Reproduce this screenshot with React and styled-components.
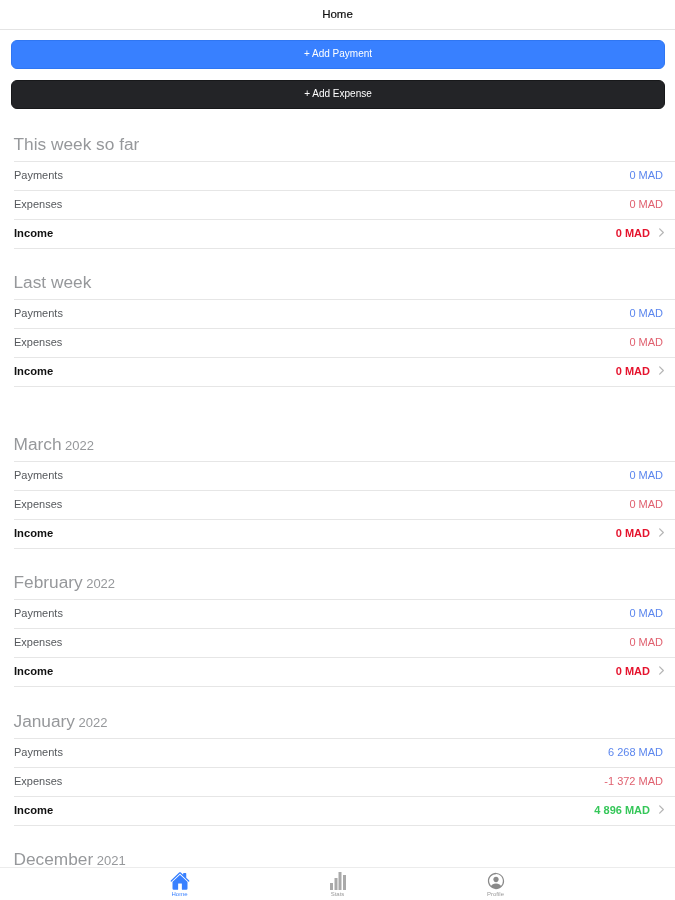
import React from "react";
import styled, { createGlobalStyle } from "styled-components";
import { IoHome, IoPersonCircleOutline, IoChevronForward } from "react-icons/io5";

const Global = createGlobalStyle`
  html, body { margin: 0; padding: 0; background: #fff; }
  body { font-family: "Liberation Sans", Arial, sans-serif; }
`;

const Page = styled.div`
  width: 675px;
  height: 900px;
  display: flex;
  flex-direction: column;
  overflow: hidden;
  background: #fff;
  filter: blur(0.6px);
`;

const Header = styled.header`
  flex: none;
  height: 30px;
  padding-bottom: 1px;
  box-sizing: border-box;
  border-bottom: 1px solid #e4e4e4;
  display: flex;
  align-items: center;
  justify-content: center;
  font-size: 11.5px;
  color: #111;
  -webkit-text-stroke: 0.2px #111;
`;

const Content = styled.main`
  flex: 1;
  min-height: 0;
  overflow: hidden;
`;

const Actions = styled.div`
  display: flex;
  flex-direction: column;
  gap: 11px;
  padding: 10px 10px 0 11px;
`;

const ActionButton = styled.div`
  height: 29px;
  box-sizing: border-box;
  border-radius: 6px;
  padding-bottom: 2px;
  display: flex;
  align-items: center;
  justify-content: center;
  color: #fff;
  font-size: 10px;
  background: ${(p) => (p.$dark ? "#232427" : "#3880ff")};
  border: 1px solid ${(p) => (p.$dark ? "#17181a" : "#2f76f2")};
`;

const Section = styled.section`
  margin-top: ${(p) => p.$gap}px;
`;

const Heading = styled.h2`
  margin: 0 0 0 13.5px;
  height: 28px;
  display: flex;
  align-items: baseline;
  gap: 3.5px;
  font-size: 17.3px;
  line-height: 22px;
  font-weight: 400;
  color: #96989b;
`;

const Year = styled.span`
  font-size: 13px;
`;

const Rows = styled.div`
  margin-left: 14px;
  border-top: 1px solid #e6e6e6;
`;

const Row = styled.div`
  height: 29px;
  padding: 0 12px 3px 0;
  box-sizing: border-box;
  border-bottom: 1px solid #e6e6e6;
  display: flex;
  align-items: center;
  justify-content: space-between;
  font-size: 11px;
  color: #55585c;
`;

const TotalLabel = styled.span`
  font-weight: 700;
  font-size: 11.2px;
  color: #111;
`;

const Value = styled.span`
  color: ${(p) => p.$color};
`;

const TotalValue = styled.span`
  display: flex;
  align-items: center;
  gap: 5px;
  font-weight: 700;
  color: ${(p) => p.$color};

  svg {
    color: #b5b5b5;
    margin-right: -5px;
  }
`;

const TabBar = styled.nav`
  flex: none;
  height: 33px;
  box-sizing: border-box;
  border-top: 1px solid #ececec;
  background: #fff;
  display: flex;
  justify-content: center;
`;

const Tab = styled.div`
  width: 158px;
  display: flex;
  flex-direction: column;
  align-items: center;
  padding-top: 3px;
  color: ${(p) => (p.$active ? "#3880ff" : "#9a9a9a")};
  font-size: 6px;
  line-height: 7px;
`;

const TabIcon = styled.div`
  height: 20px;
  display: flex;
  align-items: center;
  justify-content: center;
`;

const Stats = () => (
  <svg width="20" height="20" viewBox="0 0 20 20" fill="#a9a9a9" aria-hidden="true">
    <rect x="2" y="12" width="3" height="7" />
    <rect x="6.5" y="7" width="3" height="12" />
    <rect x="10.5" y="1" width="3" height="18" />
    <rect x="15" y="4" width="3" height="15" />
  </svg>
);

const BLUE = "#5b86ee";
const PINK = "#e0606f";
const RED = "#e5132d";
const GREEN = "#35c759";

const sections = [
  { title: "This week so far", gap: 24 },
  { title: "Last week", gap: 22 },
  { title: "March", year: "2022", gap: 46 },
  { title: "February", year: "2022", gap: 22 },
  { title: "January", year: "2022", gap: 23, payments: "6 268 MAD", expenses: "-1 372 MAD", income: "4 896 MAD", incomeColor: GREEN },
  { title: "December", year: "2021", gap: 22 },
];

export default function App() {
  return (
    <Page>
      <Global />
      <Header>Home</Header>
      <Content>
        <Actions>
          <ActionButton>+ Add Payment</ActionButton>
          <ActionButton $dark>+ Add Expense</ActionButton>
        </Actions>
        {sections.map((s) => (
          <Section key={s.title} $gap={s.gap}>
            <Heading>
              {s.title}
              {s.year && <Year>{s.year}</Year>}
            </Heading>
            <Rows>
              <Row>
                <span>Payments</span>
                <Value $color={BLUE}>{s.payments || "0 MAD"}</Value>
              </Row>
              <Row>
                <span>Expenses</span>
                <Value $color={PINK}>{s.expenses || "0 MAD"}</Value>
              </Row>
              <Row>
                <TotalLabel>Income</TotalLabel>
                <TotalValue $color={s.incomeColor || RED}>
                  {s.income || "0 MAD"}
                  <IoChevronForward size={13} />
                </TotalValue>
              </Row>
            </Rows>
          </Section>
        ))}
      </Content>
      <TabBar>
        <Tab $active>
          <TabIcon><IoHome size={20} /></TabIcon>
          Home
        </Tab>
        <Tab>
          <TabIcon><Stats /></TabIcon>
          Stats
        </Tab>
        <Tab>
          <TabIcon><IoPersonCircleOutline size={20} color="#8a8a8a" /></TabIcon>
          Profile
        </Tab>
      </TabBar>
    </Page>
  );
}
